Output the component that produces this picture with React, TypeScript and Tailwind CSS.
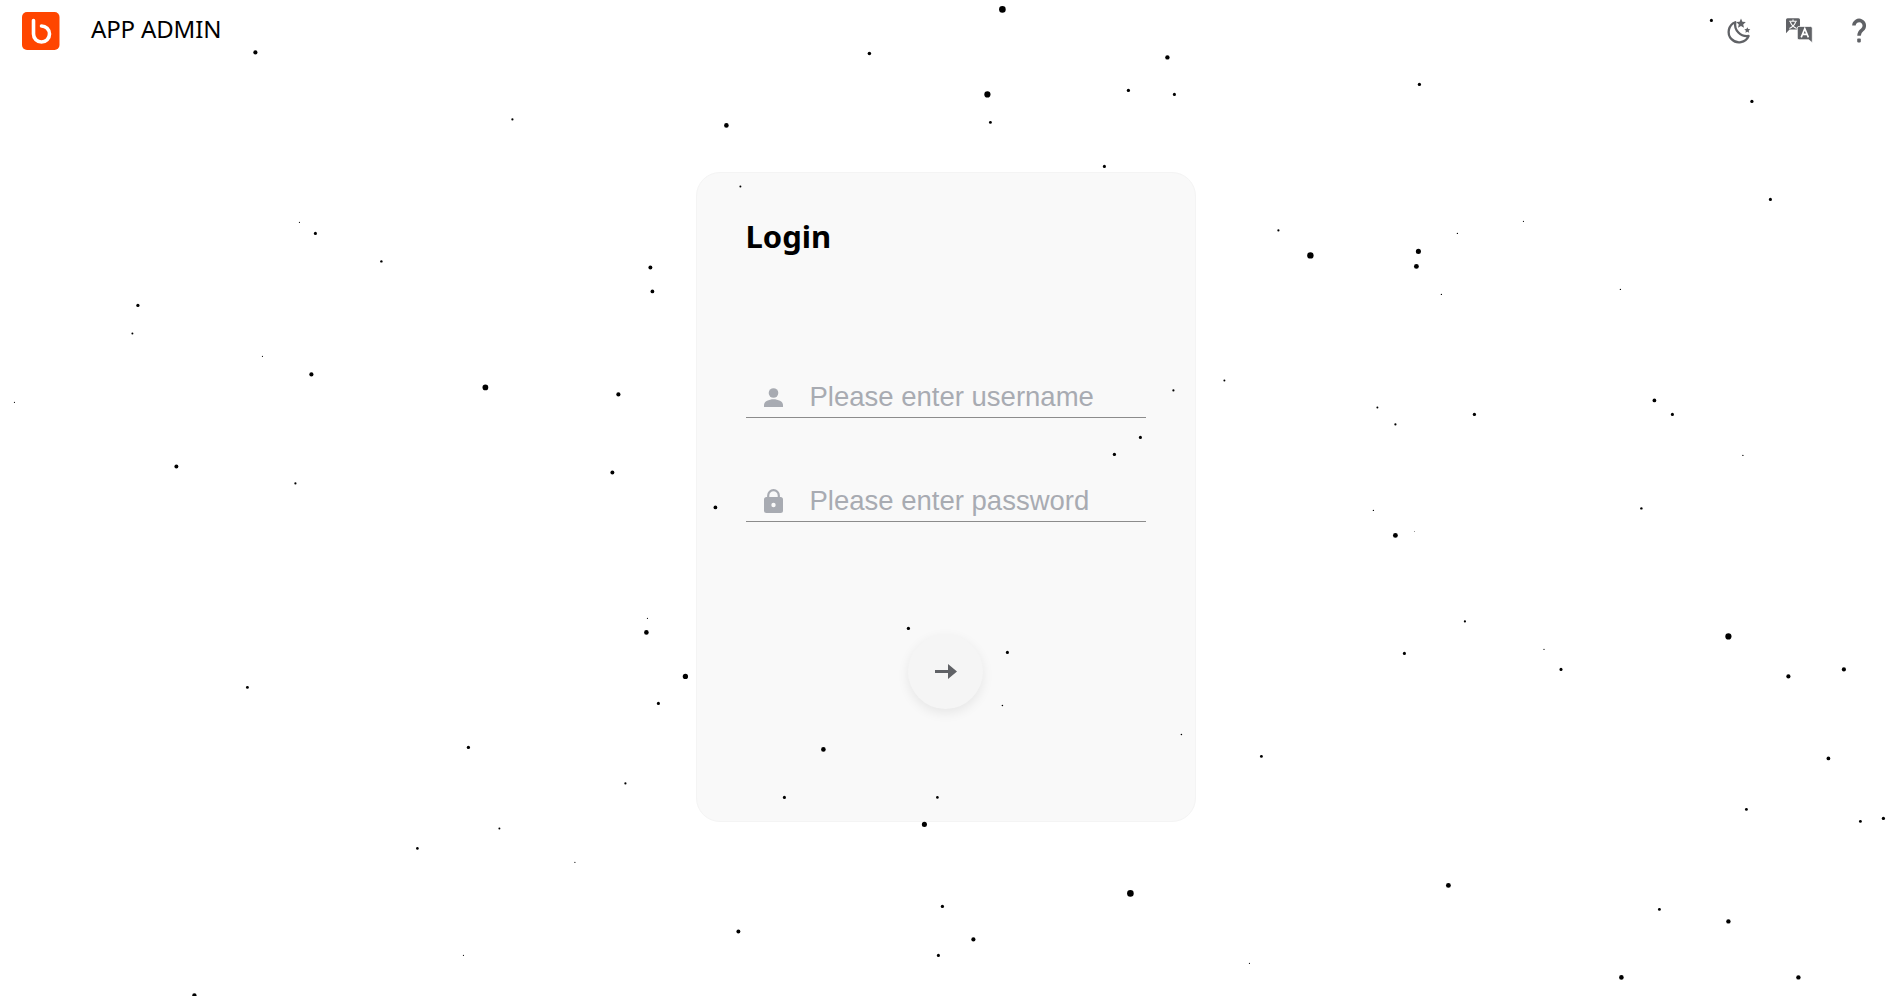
const DOTS: [number, number, number][] = [
  [255,52,1.9],[512,119,1],[299,222,.5],[315,233,1.4],[381,261,1.1],[137.5,305,1.5],[132,333,.9],[262,356,.5],[311,374,1.9],[485,387,2.6],[618,394,1.9],[650,267,1.8],[652,291,1.7],[14,402,.5],[176,466,1.8],[295,483,1],[612,472,1.8],
  [647,618,.5],[646,632,2.1],[685,676,2.4],[658,703,1.4],[247,687,1.3],[468,747,1.5],[625,783,1],[499,828,.9],[417,848,1.2],[574.5,862,.5],[463,955,.5],[194,995,2],
  [1711,20,1.4],[1419,84,1.5],[1751.5,101,1.5],[1770,199,1.4],[1278,230,1],[1310,255,2.9],[1418,251,2.3],[1416,266,2.2],[1457,233,.6],[1523,221,.5],[1441,294,.6],[1620,289,.6],[1224,380,.9],[1377,407,.9],[1395,424,1],[1474,414,1.5],[1654,400,1.7],[1672,414,1.4],[1742.5,455,.6],
  [1373,510,.6],[1395,535,2.2],[1414,531,.4],[1641,508,1.1],[1464.5,621,1],[1404,653,1.4],[1543.6,649,.5],[1560.6,669,1.4],[1728,636,2.8],[1788,676,1.9],[1843.5,669,1.9],[1828,758,1.7],[1261,756,1.3],[1746,809,1.3],[1860,821,1.3],[1883,818,1.5],[1448,885,2.2],[1659,909,1.3],[1728,921,2],[1621,977,2.1],[1798,977,2],[1249,963,.5],
  [1002,9,3],[869,53,1.6],[1167,57,2],[987,94,2.8],[1128,90,1.5],[1174,94,1.4],[990,122,1.3],[726,125,2.1],[1104,166,1.4],[740,186,.9],
  [924,824,2.3],[1130,893,3],[942,906,1.5],[973,939,1.9],[938,955,1.4],[738,931,1.8],
  [1173,390,1],[1140,437,1.4],[1114,454,1.5],[715,507,1.7],[908,628,1.5],[1007,652,1.4],[1002,705,.7],[823,749,2.1],[784,797,1.4],[937,797,1.2],[1181,734,.7],
];

function Logo() {
  return (
    <svg width="38" height="38" viewBox="0 0 38 38" className="shrink-0">
      <rect width="37.5" height="38" rx="5" fill="#ff4500" />
      <path d="M11.5 8.5 V22 A8 8 0 1 0 19.5 14" fill="none" stroke="#ffffff" strokeWidth="3.6" strokeLinecap="round" />
    </svg>
  );
}

function MoonIcon() {
  return (
    <svg width="30" height="30" viewBox="0 0 30 30" fill="#606266">
      <path d="M11.3 6.2 A10.4 10.4 0 1 0 24.6 20 A11.8 11.8 0 0 1 11.3 6.2 Z" fill="none" stroke="#606266" strokeWidth="2.3" strokeLinejoin="round" />
      <path d="M17 2.6 L18.4 5.8 L21.8 6.1 L19.2 8.4 L20 11.8 L17 10 L14 11.8 L14.8 8.4 L12.2 6.1 L15.6 5.8 Z" />
      <path d="M23.3 11.2 L24.2 13.1 L26.3 13.3 L24.7 14.7 L25.2 16.8 L23.3 15.7 L21.4 16.8 L21.9 14.7 L20.3 13.3 L22.4 13.1 Z" />
    </svg>
  );
}

function TranslateIcon() {
  return (
    <svg width="30" height="30" viewBox="0 0 30 30">
      <path d="M3.5 2.3 H14.5 A1.5 1.5 0 0 1 16 3.8 V12 A1.5 1.5 0 0 1 14.5 13.5 H5.5 L2 17.3 V3.8 A1.5 1.5 0 0 1 3.5 2.3 Z" fill="#606266" />
      <path d="M5.2 5.2 H12.8 M9 3.6 V5.2 M6.4 6 C7.4 9 9.6 11.2 12.6 12.4 M11.6 6 C10.6 9 8.4 11.2 5.4 12.4" fill="none" stroke="#ffffff" strokeWidth="1.1" />
      <path d="M15 10.4 H26.6 A1.7 1.7 0 0 1 28.3 12.1 V26.8 L24.8 23.8 H15 A1.7 1.7 0 0 1 13.3 22.1 V12.1 A1.7 1.7 0 0 1 15 10.4 Z" fill="#606266" stroke="#ffffff" strokeWidth="0.8" />
      <path d="M17.2 21.4 L20.8 12.6 L24.4 21.4 M18.4 18.4 H23.2" fill="none" stroke="#ffffff" strokeWidth="1.6" />
    </svg>
  );
}

function QuestionIcon() {
  return (
    <svg width="30" height="30" viewBox="0 0 30 30">
      <path d="M9.9 9.6 A5.2 5.2 0 1 1 18.2 13.8 C16 15.4 15 16.6 15 19.8" fill="none" stroke="#606266" strokeWidth="3.5" />
      <rect x="13.2" y="22.6" width="3.6" height="3.8" rx="0.8" fill="#606266" />
    </svg>
  );
}

function UserIcon() {
  return (
    <svg width="19" height="19" viewBox="0 0 19 19" fill="#a8abb2" className="shrink-0">
      <circle cx="9.5" cy="5" r="4.8" />
      <path d="M0 19 V16.8 C0 13.4 5 11.2 9.5 11.2 S19 13.4 19 16.8 V19 Z" />
    </svg>
  );
}

function LockIcon() {
  return (
    <svg width="19" height="24" viewBox="0 0 19 24" className="shrink-0">
      <path d="M4.2 9 V6.4 A5.3 5.3 0 0 1 14.8 6.4 V9" fill="none" stroke="#a8abb2" strokeWidth="2.2" />
      <rect y="8" width="19" height="16" rx="2.5" fill="#a8abb2" />
      <circle cx="9.5" cy="16" r="2.2" fill="#f9f9f9" />
    </svg>
  );
}

function ArrowIcon() {
  return (
    <svg width="22" height="15" viewBox="0 0 22 15" fill="#606266">
      <path d="M0 6 H13 V0 L22 7.5 L13 15 V9 H0 Z" />
    </svg>
  );
}

function Field({ icon, placeholder, type }: { icon: React.ReactNode; placeholder: string; type: string }) {
  return (
    <div className="flex h-[50px] items-center border-b border-[#8c8c8c] pl-[18px] pt-[9px]">
      <span className="flex w-[19px] shrink-0 justify-center">{icon}</span>
      <input
        type={type}
        placeholder={placeholder}
        className="ml-[27px] min-w-0 flex-1 bg-transparent text-[27.5px] text-[#303133] outline-none placeholder:text-[#a8abb2] font-['Liberation_Sans',sans-serif]"
      />
    </div>
  );
}

export default function App() {
  return (
    <div className="relative flex h-screen flex-col overflow-hidden bg-white font-['Noto_Sans',sans-serif]">
      <header className="flex h-[62px] shrink-0 items-center justify-between pl-[22px] pr-[17px]">
        <div className="flex items-center">
          <Logo />
          <span className="mb-[4px] ml-[31px] text-[24px] leading-none tracking-[-0.15px] text-black">APP ADMIN</span>
        </div>
        <div className="flex items-center gap-[30px]">
          <MoonIcon />
          <TranslateIcon />
          <QuestionIcon />
        </div>
      </header>
      <main className="flex flex-1 justify-center pt-[110px]">
        <section className="h-[650px] w-[500px] rounded-[24px] border border-[#f4f4f4] bg-[#f9f9f9] px-[49px] pt-[39px]">
          <h1 className="text-[31px] font-bold leading-[48px] text-black">Login</h1>
          <div className="mt-[108px]">
            <Field icon={<UserIcon />} placeholder="Please enter username" type="text" />
          </div>
          <div className="mt-[54px]">
            <Field icon={<LockIcon />} placeholder="Please enter password" type="password" />
          </div>
          <div className="mt-[112px] flex justify-center">
            <button className="flex h-[75px] w-[75px] items-center justify-center rounded-full bg-[#f5f5f5] shadow-[0_4px_12px_rgba(0,0,0,0.08)]">
              <ArrowIcon />
            </button>
          </div>
        </section>
      </main>
      <svg className="pointer-events-none absolute inset-0 h-full w-full" viewBox="0 0 1891 996">
        {DOTS.map(([x, y, r], i) => (
          <circle key={i} cx={x + 0.4} cy={y + 0.4} r={r * 1.1} fill="#000000" />
        ))}
      </svg>
    </div>
  );
}
